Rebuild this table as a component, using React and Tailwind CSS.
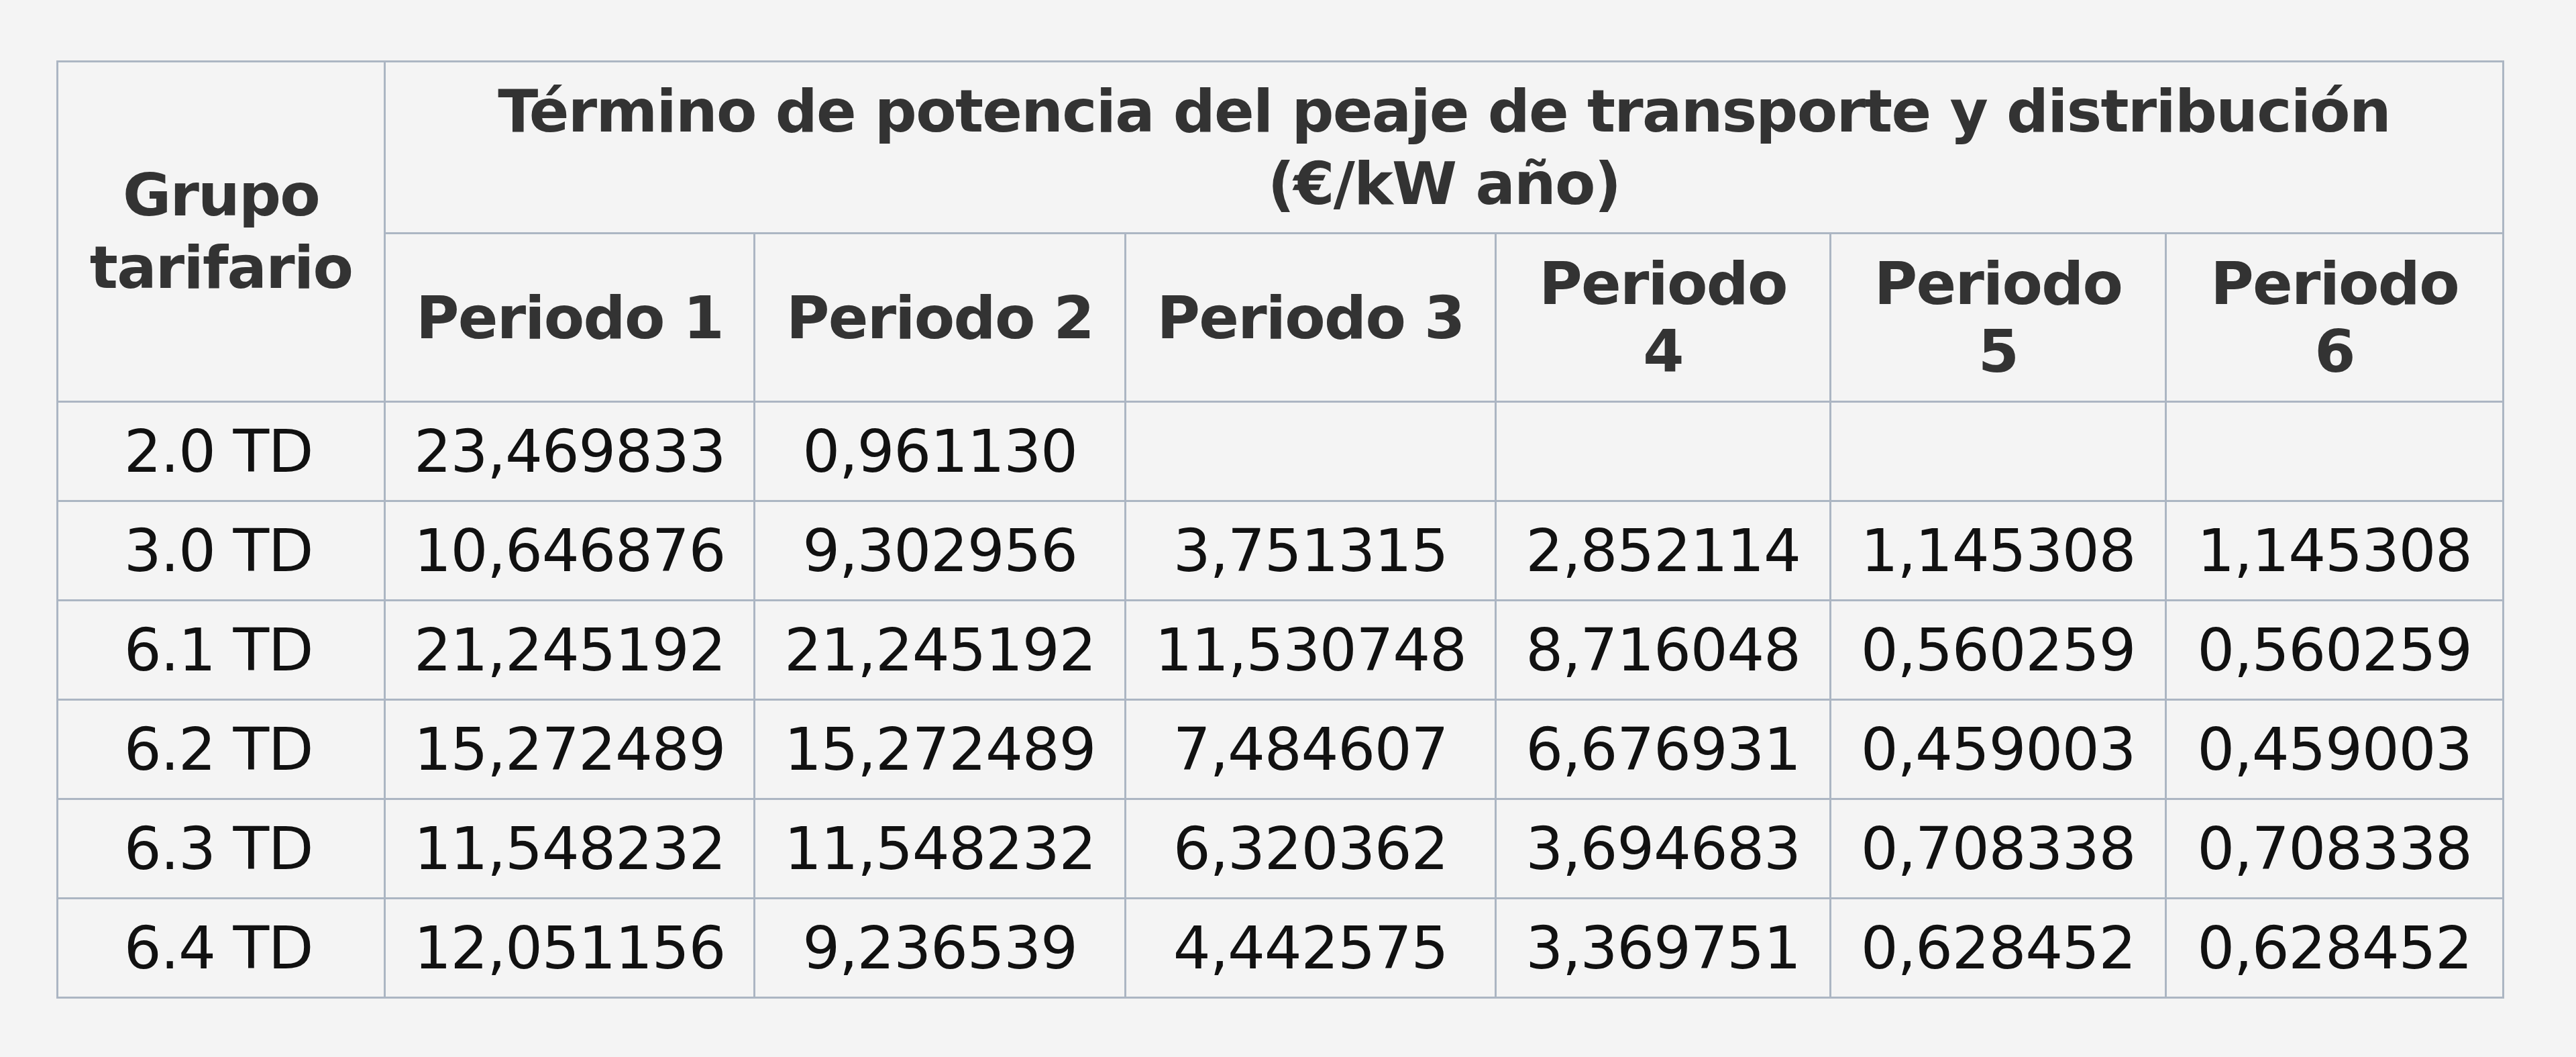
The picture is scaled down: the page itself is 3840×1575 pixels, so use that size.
const rows = [
  ["2.0 TD", "23,469833", "0,961130", "", "", "", ""],
  ["3.0 TD", "10,646876", "9,302956", "3,751315", "2,852114", "1,145308", "1,145308"],
  ["6.1 TD", "21,245192", "21,245192", "11,530748", "8,716048", "0,560259", "0,560259"],
  ["6.2 TD", "15,272489", "15,272489", "7,484607", "6,676931", "0,459003", "0,459003"],
  ["6.3 TD", "11,548232", "11,548232", "6,320362", "3,694683", "0,708338", "0,708338"],
  ["6.4 TD", "12,051156", "9,236539", "4,442575", "3,369751", "0,628452", "0,628452"],
];

const cell = "border-[3px] border-[#acb6c3] text-center align-middle px-[30px]";

export default function App() {
  return (
    <div className="min-h-screen w-full bg-[#f4f4f4] pt-[90px] pl-[84px] font-['DejaVu_Sans',sans-serif]">
      <table className="table-fixed border-collapse w-[3646px] text-[88px]">
        <colgroup>
          <col className="w-[488px]" />
          <col className="w-[551px]" />
          <col className="w-[553px]" />
          <col className="w-[552px]" />
          <col className="w-[499px]" />
          <col className="w-[500px]" />
          <col className="w-[503px]" />
        </colgroup>
        <thead className="font-bold text-[#333333] tracking-[-1.7px]">
          <tr className="h-[256px]">
            <th rowSpan={2} className={`${cell} leading-[108px]`}>
              Grupo
              <br />
              tarifario
            </th>
            <th colSpan={6} className={`${cell} leading-[108px]`}>
              Término de potencia del peaje de transporte y distribución
              <br />
              (€/kW año)
            </th>
          </tr>
          <tr className="h-[251px]">
            <th className={`${cell} whitespace-nowrap leading-[101px]`}>Periodo 1</th>
            <th className={`${cell} whitespace-nowrap leading-[101px]`}>Periodo 2</th>
            <th className={`${cell} whitespace-nowrap leading-[101px]`}>Periodo 3</th>
            <th className={`${cell} leading-[101px]`}>
              Periodo
              <br />4
            </th>
            <th className={`${cell} leading-[101px]`}>
              Periodo
              <br />5
            </th>
            <th className={`${cell} leading-[101px]`}>
              Periodo
              <br />6
            </th>
          </tr>
        </thead>
        <tbody className="text-[#111111] tracking-[-1.3px]">
          {rows.map((r) => (
            <tr key={r[0]} className="h-[148px]">
              {r.map((v, i) => (
                <td
                  key={i}
                  className={`${cell} whitespace-nowrap leading-[104px] ${i === 0 ? "pr-[38px]" : ""}`}
                >
                  {v}
                </td>
              ))}
            </tr>
          ))}
        </tbody>
      </table>
    </div>
  );
}
